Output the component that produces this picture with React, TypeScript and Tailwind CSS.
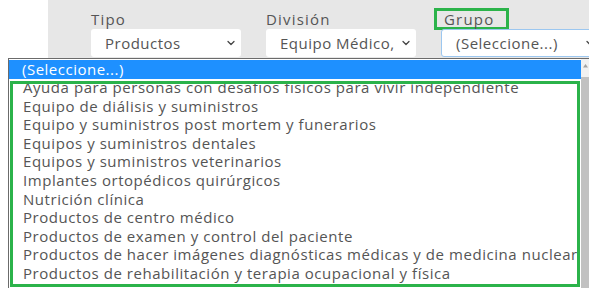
import { ChevronDown } from 'lucide-react'

const ITEMS = [
  'Ayuda para personas con desafíos físicos para vivir independiente',
  'Equipo de diálisis y suministros',
  'Equipo y suministros post mortem y funerarios',
  'Equipos y suministros dentales',
  'Equipos y suministros veterinarios',
  'Implantes ortopédicos quirúrgicos',
  'Nutrición clínica',
  'Productos de centro médico',
  'Productos de examen y control del paciente',
  'Productos de hacer imágenes diagnósticas médicas y de medicina nuclear',
  'Productos de rehabilitación y terapia ocupacional y física',
]

function Field({ label, value, width, boxed, focused }: { label: string; value: string; width: string; boxed?: boolean; focused?: boolean }) {
  return (
    <div className="flex flex-col">
      <div className={`h-[29px] pt-[7px] ${boxed ? '-ml-[7px]' : ''}`}>
        <span
          className={`inline-block text-[15px] leading-[17px] tracking-[1.2px] text-[#555] ${
            boxed ? 'border-[3px] border-[#2bb34a] pl-[7px] pr-[12px] -mt-[1px] h-[22px] leading-[16px]' : 'pt-[2px]'
          }`}
        >
          {label}
        </span>
      </div>
      <div
        className={`${width} h-[28px] bg-white rounded-[3px] flex items-center gap-[6px] pl-[14px] pr-[4px] text-[15px] tracking-[0.5px] text-[#555] ${
          focused ? 'border border-[#9cc7f0] pl-[13px]' : ''
        }`}
      >
        <span className="flex-1 overflow-hidden whitespace-nowrap">{value}</span>
        <ChevronDown size={12} strokeWidth={2.5} className="text-[#444] shrink-0" />
      </div>
    </div>
  )
}

export default function App() {
  return (
    <div className="relative w-[589px] h-[288px] overflow-hidden bg-white" style={{ fontFamily: '"Open Sans", "Liberation Sans", sans-serif' }}>
      <div className="ml-[48px] h-[58px] bg-[#e7e7e7] flex gap-[25px] pl-[43px]">
        <Field label="Tipo" value="Productos" width="w-[150px]" />
        <Field label="División" value="Equipo Médico, Accesorios y Suministros" width="w-[150px]" />
        <Field label="Grupo" value="(Seleccione...)" width="w-[160px]" boxed focused />
      </div>

      <div className="absolute left-[8px] top-[58px] w-[590px] h-[240px] bg-white border border-[#6b6b6b] flex">
        <div className="flex-1 flex flex-col pt-[1px]">
          <div className="h-[19px] bg-[#1e90ff] text-white text-[15px] tracking-[0.5px] leading-[19px] pl-[13px]">(Seleccione...)</div>
          <div className="mt-[2px] ml-[1px] w-[570px] h-[206px] border-[3px] border-[#2bb34a] pl-[10px] overflow-hidden">
            <div className="-mt-[6px]">
              {ITEMS.map((it) => (
                <div key={it} className="text-[15px] tracking-[0.55px] leading-[18.6px] h-[18.6px] text-[#555] whitespace-nowrap">
                  {it}
                </div>
              ))}
            </div>
          </div>
        </div>
      </div>
      <div className="absolute left-[581px] top-[59px] w-[8px] h-[229px] bg-[#f1f1f1] flex flex-col items-center">
        <svg width="7" height="6" viewBox="0 0 7 6" className="mt-[4px]">
          <path d="M3.5 1 L6 4.5 L1 4.5 Z" fill="#a3a3a3" />
        </svg>
        <div className="mt-[8px] w-[8px] flex-1 bg-[#c1c1c1]" />
      </div>
    </div>
  )
}
